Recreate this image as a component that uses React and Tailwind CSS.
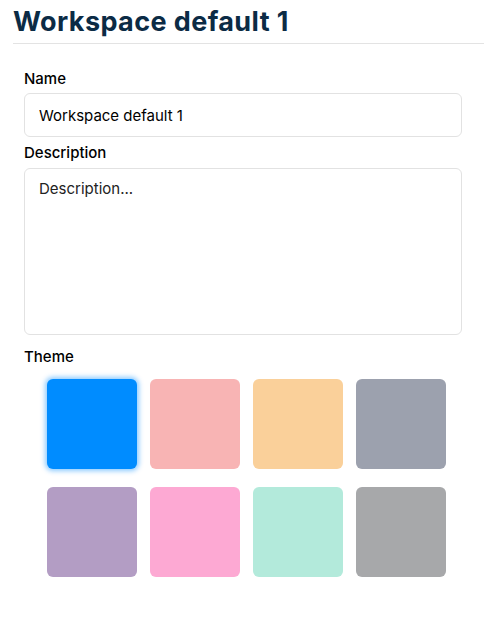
import { useState } from "react";

const themes = [
  "#008cff",
  "#f8b4b4",
  "#fad09a",
  "#9ca1ae",
  "#b39dc4",
  "#fda9d3",
  "#b3eadb",
  "#a7a8aa",
];

const App = () => {
  const [name, setName] = useState("Workspace default 1");
  const [description, setDescription] = useState("");
  const [theme, setTheme] = useState(0);

  return (
    <div className="min-h-[639px] bg-white font-['Inter',sans-serif] text-black">
      <div className="pl-[13px] pt-[5px]">
        <h1 className="text-[27px] font-bold leading-[34px] tracking-[0.4px] text-[#0b2b45]">
          Workspace default 1
        </h1>
        <div className="mt-[4px] h-px bg-[#e3e3e3]" />
      </div>

      <div className="px-[24px] pt-[24px] pr-[22px]">
        <label className="block text-[15px] font-medium leading-[22px]">Name</label>
        <input
          type="text"
          value={name}
          onChange={(e) => setName(e.target.value)}
          className="mt-[3px] h-[44px] w-full rounded-[6px] border border-[#e2e2e2] px-[14px] text-[15px] outline-none"
        />

        <label className="mt-[5px] block text-[15px] font-medium leading-[22px]">Description</label>
        <textarea
          placeholder="Description..."
          value={description}
          onChange={(e) => setDescription(e.target.value)}
          className="mt-[4px] block h-[167px] w-full resize-none rounded-[6px] border border-[#e2e2e2] px-[14px] pt-[9px] pb-[8px] text-[15px] leading-[22px] outline-none placeholder:text-[#222]"
        />

        <label className="mt-[11px] block text-[15px] font-medium leading-[22px]">Theme</label>
        <div className="mt-[11px] grid w-fit grid-cols-4 gap-x-[13px] gap-y-[18px] pl-[23px]">
          {themes.map((color, i) => (
            <button
              key={color}
              type="button"
              onClick={() => setTheme(i)}
              className={
                theme === i
                  ? "h-[90px] w-[90px] rounded-[6px] shadow-[0_0_5px_2px_rgba(0,140,255,0.45)]"
                  : "h-[90px] w-[90px] rounded-[6px]"
              }
              style={{ backgroundColor: color }}
            />
          ))}
        </div>
      </div>
    </div>
  );
};

export default App;
